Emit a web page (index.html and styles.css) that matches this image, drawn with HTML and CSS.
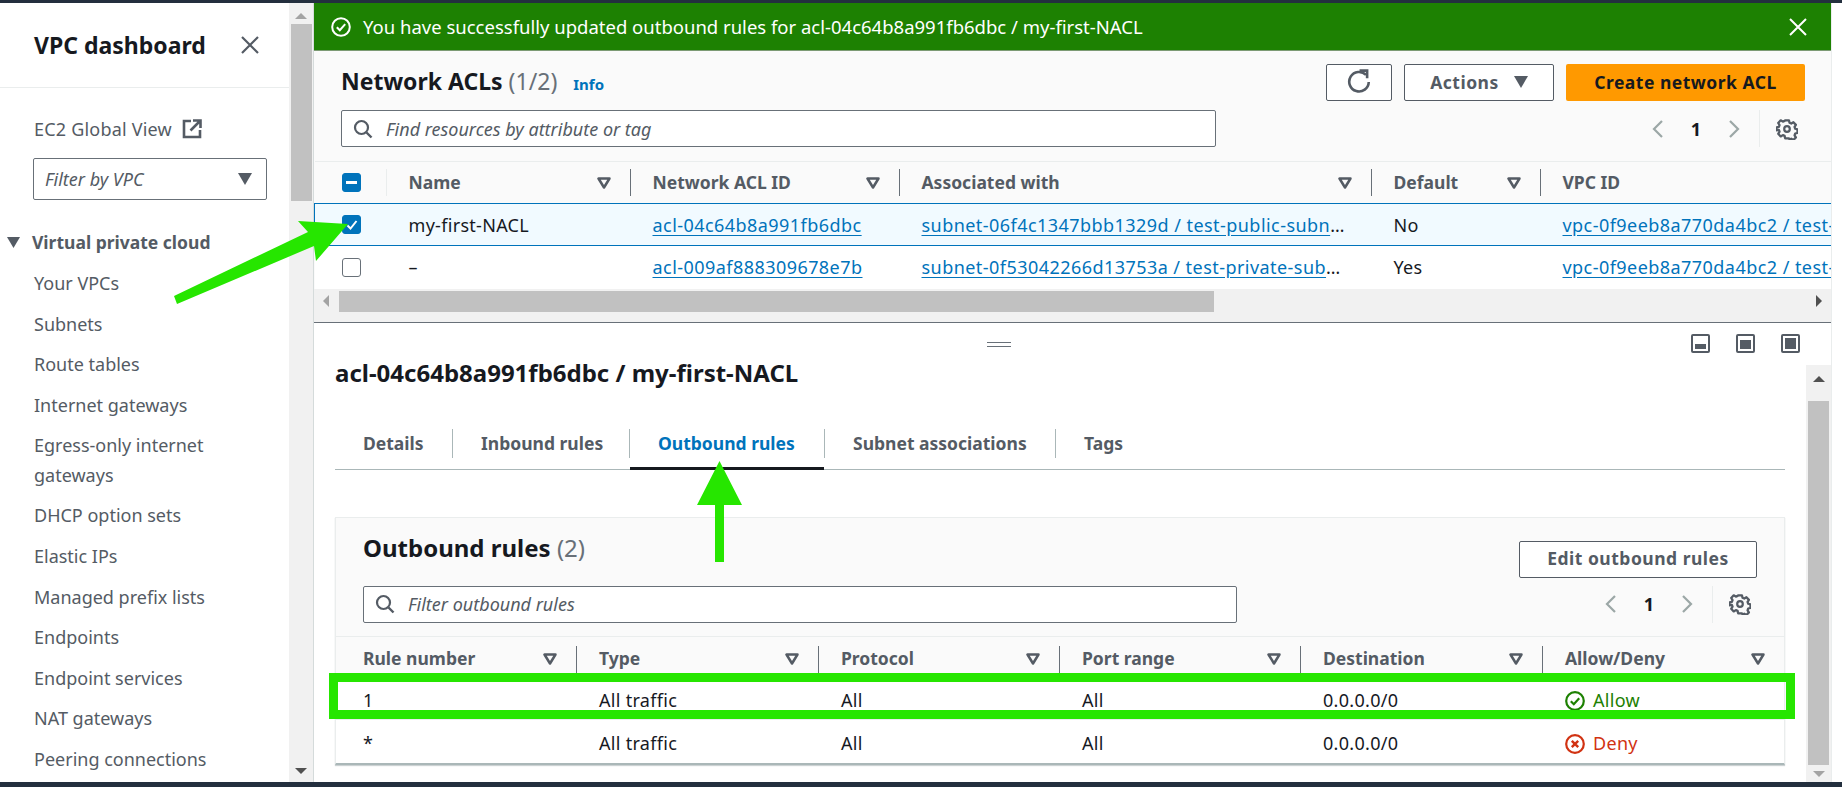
FILE: index.html
```html
<!DOCTYPE html>
<html lang="en">
<head>
    <meta charset="UTF-8">
    <title>Network ACLs | VPC Console</title>
    <link rel="stylesheet" href="styles.css">
</head>
<body>
    <svg class="defs" width="0" height="0">
        <symbol id="sort" viewBox="0 0 14 12"><path d="M1.500 1.500h11L7 10.500z" fill="none" stroke="#545b64" stroke-width="2.500" stroke-linejoin="round"/></symbol>
        <symbol id="search" viewBox="0 0 20 20"><circle cx="8.5" cy="8.5" r="6.5" fill="none" stroke="#545b64" stroke-width="2.2"/><path d="M13.5 13.5l5 5" stroke="#545b64" stroke-width="2.4"/></symbol>
        <symbol id="gear" viewBox="0 0 22 22"><path d="M9 2h4l.6 2.6 1.8.8 2.3-1.4 2.6 2.8-1.4 2.2.7 1.9 2.4.6v3.8l-2.4.6-.7 1.9 1.4 2.2-2.6 2.8-2.3-1.4-1.8.8L13 21H9l-.6-2.6-1.8-.8-2.3 1.4-2.6-2.8 1.4-2.2-.7-1.9L0 12.5V9.5l2.4-.6.7-1.9-1.4-2.2L4.300 2l2.300 1.400 1.800-.8z" transform="translate(.6 .4) scale(.95)" fill="none" stroke="#545b64" stroke-width="2.400" stroke-linejoin="round"/><circle cx="11" cy="11" r="2.800" fill="none" stroke="#545b64" stroke-width="2.200"/></symbol>
        <symbol id="prev" viewBox="0 0 12 20"><path d="M10 2L2 10l8 8" fill="none" stroke="#9ba7a6" stroke-width="2.200"/></symbol>
        <symbol id="next" viewBox="0 0 12 20"><path d="M2 2l8 8-8 8" fill="none" stroke="#9ba7a6" stroke-width="2.200"/></symbol>
    </svg>

    <div class="topbar"></div>

    <div class="app">
        <nav class="sidebar">
            <div class="side-head">
                <span class="side-title">VPC dashboard</span>
                <svg class="side-close" width="18" height="18" viewBox="0 0 18 18"><path d="M1 1l16 16M17 1L1 17" stroke="#545b64" stroke-width="2.200"/></svg>
            </div>
            <div class="global-view">
                <span>EC2 Global View</span>
                <svg width="20" height="20" viewBox="0 0 20 20"><path d="M9 2H2v16h16v-7" fill="none" stroke="#545b64" stroke-width="2.600"/><path d="M11 1.500h7.500V9M18 2L8.500 11.500" fill="none" stroke="#545b64" stroke-width="2.600"/></svg>
            </div>
            <div class="vpc-filter">
                <span>Filter by VPC</span>
                <svg width="14" height="12" viewBox="0 0 14 12"><path d="M0 0h14L7 12z" fill="#545b64"/></svg>
            </div>
            <div class="side-section">
                <svg width="13" height="11" viewBox="0 0 13 11"><path d="M0 0h13L6.500 11z" fill="#545b64"/></svg>
                <span>Virtual private cloud</span>
            </div>
            <ul class="side-list">
                <li>Your VPCs</li>
                <li>Subnets</li>
                <li>Route tables</li>
                <li>Internet gateways</li>
                <li class="two-line">Egress-only internet gateways</li>
                <li>DHCP option sets</li>
                <li>Elastic IPs</li>
                <li>Managed prefix lists</li>
                <li>Endpoints</li>
                <li>Endpoint services</li>
                <li>NAT gateways</li>
                <li>Peering connections</li>
            </ul>
        </nav>

        <div class="vscroll side-scroll">
            <span class="arrow-up"></span>
            <span class="thumb side-thumb"></span>
            <span class="arrow-down"></span>
        </div>

        <main class="main">
            <div class="flash">
                <svg width="20" height="20" viewBox="0 0 20 20"><circle cx="10" cy="10" r="8.800" fill="none" stroke="#fff" stroke-width="2"/><path d="M5.800 10.200l3 3 5.400-6" fill="none" stroke="#fff" stroke-width="2"/></svg>
                <span class="flash-text">You have successfully updated outbound rules for acl-04c64b8a991fb6dbc / my-first-NACL</span>
                <svg class="flash-close" width="18" height="18" viewBox="0 0 18 18"><path d="M1 1l16 16M17 1L1 17" stroke="#fff" stroke-width="2"/></svg>
            </div>

            <section class="top-panel">
                <div class="toolbar">
                    <div class="tool-title">
                        <h2>Network ACLs <span class="count">(1/2)</span></h2>
                        <a class="info">Info</a>
                    </div>
                    <div class="tool-buttons">
                        <button class="btn btn-icon">
                            <svg width="24" height="26" viewBox="0 0 22 24"><path d="M17.500 5.500A9 9 0 1 0 20 12" fill="none" stroke="#545b64" stroke-width="2.400"/><path d="M11.500 1.500h7v7" fill="none" stroke="#545b64" stroke-width="2.400"/></svg>
                        </button>
                        <button class="btn btn-actions">Actions <svg width="14" height="12" viewBox="0 0 14 12"><path d="M0 0h14L7 12z" fill="#545b64"/></svg></button>
                        <button class="btn btn-primary">Create network ACL</button>
                    </div>
                </div>
                <div class="filter-row">
                    <div class="search search-top">
                        <svg width="20" height="20"><use href="#search"/></svg>
                        <span>Find resources by attribute or tag</span>
                    </div>
                    <div class="pager">
                        <svg width="12" height="20"><use href="#prev"/></svg>
                        <span class="page-no">1</span>
                        <svg width="12" height="20"><use href="#next"/></svg>
                        <span class="pager-sep"></span>
                        <svg width="22" height="22"><use href="#gear"/></svg>
                    </div>
                </div>

                <table class="grid grid-top">
                    <colgroup>
                        <col style="width:72px"><col style="width:244px"><col style="width:269px"><col style="width:472px"><col style="width:169px"><col style="width:291px">
                    </colgroup>
                    <thead>
                        <tr>
                            <th><div class="th-in th-faint"><span class="cb cb-mixed"></span></div></th>
                            <th><div class="th-in"><span>Name</span><svg width="14" height="12"><use href="#sort"/></svg></div></th>
                            <th><div class="th-in"><span>Network ACL ID</span><svg width="14" height="12"><use href="#sort"/></svg></div></th>
                            <th><div class="th-in"><span>Associated with</span><svg width="14" height="12"><use href="#sort"/></svg></div></th>
                            <th><div class="th-in"><span>Default</span><svg width="14" height="12"><use href="#sort"/></svg></div></th>
                            <th><div class="th-in th-last"><span>VPC ID</span></div></th>
                        </tr>
                    </thead>
                    <tbody>
                        <tr class="selected">
                            <td class="check-col"><span class="cb cb-checked"><svg width="14" height="14" viewBox="0 0 14 14"><path d="M2.500 7.500l3 3 6-7.500" fill="none" stroke="#fff" stroke-width="2"/></svg></span></td>
                            <td>my-first-NACL</td>
                            <td><a>acl-04c64b8a991fb6dbc</a></td>
                            <td><a>subnet-06f4c1347bbb1329d / test-public-subnet-1</a></td>
                            <td>No</td>
                            <td class="clip"><a>vpc-0f9eeb8a770da4bc2 / test-</a></td>
                        </tr>
                        <tr class="plain">
                            <td class="check-col"><span class="cb"></span></td>
                            <td>–</td>
                            <td><a>acl-009af888309678e7b</a></td>
                            <td><a>subnet-0f53042266d13753a / test-private-subnet-1</a></td>
                            <td>Yes</td>
                            <td class="clip"><a>vpc-0f9eeb8a770da4bc2 / test-</a></td>
                        </tr>
                    </tbody>
                </table>

                <div class="hscroll">
                    <span class="arrow-left"></span>
                    <span class="thumb h-thumb"></span>
                    <span class="arrow-right"></span>
                </div>
            </section>

            <section class="split-bar">
                <span class="drag"></span>
                <div class="split-icons">
                    <span class="split-icon"><i class="fill-low"></i></span>
                    <span class="split-icon"><i class="fill-mid"></i></span>
                    <span class="split-icon"><i class="fill-full"></i></span>
                </div>
            </section>

            <section class="detail">
                <div class="detail-content">
                    <h2 class="detail-title">acl-04c64b8a991fb6dbc / my-first-NACL</h2>
                    <div class="tabs">
                        <span class="tab tab-details">Details</span>
                        <span class="tab tab-inbound">Inbound rules</span>
                        <span class="tab tab-active">Outbound rules</span>
                        <span class="tab tab-subnet">Subnet associations</span>
                        <span class="tab tab-tags">Tags</span>
                    </div>

                    <div class="card">
                        <div class="card-head">
                            <div class="card-top">
                                <h2>Outbound rules <span class="count">(2)</span></h2>
                                <button class="btn btn-edit">Edit outbound rules</button>
                            </div>
                            <div class="card-filter">
                                <div class="search search-card">
                                    <svg width="20" height="20"><use href="#search"/></svg>
                                    <span>Filter outbound rules</span>
                                </div>
                                <div class="pager">
                                    <svg width="12" height="20"><use href="#prev"/></svg>
                                    <span class="page-no">1</span>
                                    <svg width="12" height="20"><use href="#next"/></svg>
                                    <span class="pager-sep"></span>
                                    <svg width="22" height="22"><use href="#gear"/></svg>
                                </div>
                            </div>
                        </div>
                        <table class="grid grid-rules">
                            <colgroup>
                                <col style="width:241px"><col style="width:242px"><col style="width:241px"><col style="width:241px"><col style="width:242px"><col style="width:241px">
                            </colgroup>
                            <thead>
                                <tr>
                                    <th><div class="th-in"><span>Rule number</span><svg width="14" height="12"><use href="#sort"/></svg></div></th>
                                    <th><div class="th-in"><span>Type</span><svg width="14" height="12"><use href="#sort"/></svg></div></th>
                                    <th><div class="th-in"><span>Protocol</span><svg width="14" height="12"><use href="#sort"/></svg></div></th>
                                    <th><div class="th-in"><span>Port range</span><svg width="14" height="12"><use href="#sort"/></svg></div></th>
                                    <th><div class="th-in"><span>Destination</span><svg width="14" height="12"><use href="#sort"/></svg></div></th>
                                    <th><div class="th-in th-last"><span>Allow/Deny</span><svg width="14" height="12"><use href="#sort"/></svg></div></th>
                                </tr>
                            </thead>
                            <tbody>
                                <tr>
                                    <td>1</td><td>All traffic</td><td>All</td><td>All</td><td>0.0.0.0/0</td>
                                    <td class="allow">
                                        <svg width="20" height="20" viewBox="0 0 20 20"><circle cx="10" cy="10" r="8.800" fill="none" stroke="#1d8102" stroke-width="2.200"/><path d="M5.800 10.200l3 3 5.400-6" fill="none" stroke="#1d8102" stroke-width="2.200"/></svg>
                                        <span>Allow</span>
                                    </td>
                                </tr>
                                <tr>
                                    <td>*</td><td>All traffic</td><td>All</td><td>All</td><td>0.0.0.0/0</td>
                                    <td class="deny">
                                        <svg width="20" height="20" viewBox="0 0 20 20"><circle cx="10" cy="10" r="8.800" fill="none" stroke="#d13212" stroke-width="2.200"/><path d="M6.800 6.800l6.400 6.400M13.200 6.800l-6.400 6.400" stroke="#d13212" stroke-width="2.400"/></svg>
                                        <span>Deny</span>
                                    </td>
                                </tr>
                            </tbody>
                        </table>
                    </div>
                </div>
                <div class="vscroll panel-scroll">
                    <span class="arrow-up"></span>
                    <span class="thumb panel-thumb"></span>
                    <span class="arrow-down arrow-faint"></span>
                </div>
            </section>
        </main>

        <div class="edge"></div>
    </div>

    <div class="bottombar"></div>

    <!-- green annotations drawn over the screenshot -->
    <svg class="marks" width="1842" height="787" viewBox="0 0 1842 787">
        <path d="M174 296L308 232L298 221L348 224L316 261L314 246L177 304z" fill="#26e600"/>
        <path d="M719.500 461L742 505H724V562H715V505H697z" fill="#26e600"/>
        <rect x="333.500" y="677.500" width="1457" height="37" fill="none" stroke="#26e600" stroke-width="9"/>
    </svg>
</body>
</html>
```

FILE: styles.css
```css
* {
    box-sizing: border-box;
}

body {
    margin: 0;
    width: 1842px;
    height: 787px;
    overflow: hidden;
    background-color: #fff;
    color: #16191f;
    font-family: "Noto Sans", sans-serif;
    font-size: 18px;
}

.defs {
    display: block;
    height: 0;
}

.marks {
    position: absolute;
    left: 0;
    top: 0;
    pointer-events: none;
}

.topbar {
    height: 3px;
    background-color: #232f3e;
}

.bottombar {
    height: 5px;
    background-color: #232f3e;
}

.app {
    display: flex;
    height: 779px;
}

/* sidebar */
.sidebar {
    width: 289px;
    flex: none;
    overflow: hidden;
    color: #545b64;
}

.side-head {
    display: flex;
    align-items: center;
    justify-content: space-between;
    height: 85px;
    padding: 0 30px 0 34px;
    border-bottom: 1px solid #eaeded;
}

.side-title {
    font-size: 23px;
    font-weight: 700;
    color: #16191f;
}

.global-view {
    display: flex;
    align-items: center;
    gap: 10px;
    height: 24px;
    margin: 29px 0 0 34px;
    letter-spacing: 0.2px;
}

.vpc-filter {
    display: flex;
    align-items: center;
    justify-content: space-between;
    width: 234px;
    height: 42px;
    margin: 17px 0 0 33px;
    padding: 0 14px 0 11px;
    border: 1px solid #687078;
    border-radius: 2px;
    font-style: italic;
}

.side-section {
    display: flex;
    align-items: center;
    gap: 12px;
    margin: 30px 0 0 7px;
    height: 24px;
    font-size: 17.500px;
    font-weight: 700;
}

.side-list {
    list-style: none;
    margin: 9px 0 0;
    padding: 0 30px 0 34px;
}

.side-list li {
    height: 40.600px;
    line-height: 40.600px;
}

.side-list .two-line {
    height: 70px;
    line-height: 30px;
    padding-top: 5px;
}

/* scrollbars */
.vscroll {
    display: flex;
    flex-direction: column;
    align-items: center;
    flex: none;
    width: 25px;
    background-color: #f1f1f1;
}

.side-scroll {
    border-right: 1px solid #d5dbdb;
}

.thumb {
    display: block;
    background-color: #c1c1c1;
}

.side-thumb {
    width: 21px;
    height: 177px;
    margin-top: 5px;
}

.arrow-up, .arrow-down {
    width: 0;
    height: 0;
    border-left: 6px solid transparent;
    border-right: 6px solid transparent;
}

.arrow-up {
    margin-top: 9px;
    border-bottom: 6px solid #a3a3a3;
}

.arrow-down {
    margin-top: auto;
    margin-bottom: 8px;
    border-top: 6px solid #505050;
}

.arrow-faint {
    border-top-color: #a3a3a3;
}

.side-scroll .arrow-up {
    margin-top: 10px;
}

.hscroll {
    display: flex;
    align-items: center;
    height: 33px;
    padding: 0 9px 8px;
    background-color: #f1f1f1;
}

.arrow-left, .arrow-right {
    width: 0;
    height: 0;
    border-top: 6px solid transparent;
    border-bottom: 6px solid transparent;
}

.arrow-left {
    border-right: 6px solid #a3a3a3;
}

.arrow-right {
    margin-left: auto;
    border-left: 6px solid #505050;
}

.h-thumb {
    width: 875px;
    height: 21px;
    margin-left: 10px;
}

/* main column */
.main {
    display: flex;
    flex-direction: column;
    width: 1517px;
    flex: none;
    min-width: 0;
}

.edge {
    flex: 1;
    border-left: 1px solid #eaeded;
}

.flash {
    display: flex;
    align-items: center;
    height: 48px;
    padding: 0 24px 0 17px;
    background-color: #1d8102;
    border-bottom: 1px solid #7c9a74;
    color: #fff;
    font-size: 18.500px;
}

.flash-text {
    margin-left: 12px;
}

.flash-close {
    margin-left: auto;
}

.top-panel {
    background-color: #fafafa;
    border-bottom: 1px solid #687078;
}

.toolbar {
    display: flex;
    align-items: center;
    justify-content: space-between;
    height: 50px;
    padding: 13px 26px 0 27px;
}

.tool-title {
    display: flex;
    align-items: baseline;
    gap: 16px;
    margin-top: -1px;
}

h2 {
    margin: 0;
    font-size: 23px;
    font-weight: 700;
    line-height: 1.2;
}

.count {
    font-weight: 400;
    color: #687078;
}

.info {
    color: #0073bb;
    font-size: 15px;
    font-weight: 700;
}

.tool-buttons {
    display: flex;
    gap: 12px;
}

.btn {
    display: flex;
    align-items: center;
    justify-content: center;
    height: 37px;
    padding: 0 0 2px;
    border: 1px solid #545b64;
    border-radius: 2px;
    background-color: #fff;
    color: #545b64;
    font-family: inherit;
    font-size: 17.500px;
    font-weight: 700;
    letter-spacing: 0.5px;
}

.btn-icon {
    width: 66px;
}

.btn-actions {
    width: 150px;
    gap: 15px;
}

.btn-primary {
    width: 239px;
    border: none;
    background-color: #f90;
    color: #16191f;
}

.btn-edit {
    width: 238px;
}

.filter-row, .card-filter {
    display: flex;
    align-items: center;
    justify-content: space-between;
}

.filter-row {
    height: 37px;
    margin-top: 9px;
    padding: 0 33px 0 27px;
}

.search {
    display: flex;
    align-items: center;
    gap: 13px;
    height: 37px;
    padding-left: 11px;
    border: 1px solid #687078;
    border-radius: 2px;
    background-color: #fff;
    color: #545b64;
    font-style: italic;
}

.search-top {
    width: 875px;
}

.search-card {
    width: 874px;
}

.pager {
    display: flex;
    align-items: center;
}

.page-no {
    width: 64px;
    text-align: center;
    font-weight: 700;
}

.pager-sep {
    width: 1px;
    height: 37px;
    margin: 0 16px 0 19px;
    background-color: #eaeded;
}

/* tables */
.grid {
    border-collapse: collapse;
    table-layout: fixed;
}

.grid-top {
    width: 1517px;
    margin-top: 14px;
    border-top: 1px solid #eaeded;
}

.grid th {
    padding: 0;
    height: 42px;
    text-align: left;
    font-size: 17.500px;
    font-weight: 700;
    color: #545b64;
}

.th-in {
    display: flex;
    align-items: center;
    justify-content: space-between;
    height: 27px;
    padding: 0 19px 0 22px;
    border-right: 1px solid #687078;
}

.th-in span {
    margin-bottom: 2px;
}

.th-in .cb {
    margin-bottom: 0;
}

.th-faint {
    justify-content: flex-start;
    padding-left: 27px;
    border-right-color: #eaeded;
}

.th-last {
    border-right: none;
}

.grid td {
    padding: 0 24px 0 22px;
    overflow: hidden;
    white-space: nowrap;
    text-overflow: ellipsis;
    letter-spacing: 0.3px;
}

.grid-top td {
    height: 42px;
    background-color: #fff;
}

.grid-top .plain td {
    height: 43px;
}

.grid-top .clip {
    text-overflow: clip;
    padding-right: 0;
}

.grid-top .check-col {
    padding-left: 27px;
}

.grid-top .selected td {
    background-color: #f1faff;
    border-top: 1px solid #0073bb;
    border-bottom: 1px solid #0073bb;
}

.grid-top .selected td:first-child {
    border-left: 1px solid #0073bb;
}

.grid a {
    color: #0073bb;
    letter-spacing: 0.45px;
    text-decoration: underline;
    text-underline-offset: 3px;
}

.cb {
    display: block;
    width: 19px;
    height: 19px;
    border: 1px solid #687078;
    border-radius: 3px;
    background-color: #fff;
}

.cb-mixed {
    border-color: #0073bb;
    background-color: #0073bb;
}

.cb-mixed::after {
    content: "";
    display: block;
    width: 11px;
    height: 3px;
    margin: 7px 3px;
    background-color: #fff;
}

.cb-checked {
    display: flex;
    align-items: center;
    justify-content: center;
    border-color: #0073bb;
    background-color: #0073bb;
}

/* split panel */
.split-bar {
    display: flex;
    align-items: center;
    flex: none;
    height: 42px;
    padding-right: 31px;
}

.drag {
    width: 24px;
    height: 5px;
    margin-left: 673px;
    margin-top: 2px;
    border-top: 1px solid #687078;
    border-bottom: 1px solid #687078;
}

.split-icons {
    display: flex;
    gap: 26px;
    margin-left: auto;
}

.split-icon {
    display: flex;
    align-items: flex-end;
    width: 19px;
    height: 19px;
    padding: 2px;
    border: 2px solid #545b64;
    border-radius: 2px;
}

.split-icon i {
    display: block;
    width: 100%;
    background-color: #545b64;
}

.fill-low {
    height: 5px;
}

.fill-mid {
    height: 9px;
}

.fill-full {
    height: 100%;
}

.detail {
    display: flex;
    flex: 1;
    min-height: 0;
}

.detail-content {
    flex: 1;
    min-width: 0;
    padding: 0 21px;
}

.detail-title {
    margin-top: -5px;
    font-size: 24px;
    line-height: 26px;
}

.tabs {
    display: flex;
    align-items: flex-start;
    height: 41px;
    margin-top: 43px;
    border-bottom: 1px solid #aab7b8;
    font-size: 17.500px;
    font-weight: 700;
    white-space: nowrap;
    color: #545b64;
}

.tab {
    display: flex;
    align-items: center;
    height: 29px;
    padding: 0 0 0 28px;
    border-right: 1px solid #aab7b8;
}

.tab-tags {
    border-right: none;
}

.tab-details {
    width: 118px;
}

.tab-inbound {
    width: 177px;
}

.tab-active {
    position: relative;
    width: 195px;
    color: #0073bb;
}

.tab-active::after {
    content: "";
    position: absolute;
    left: 0;
    right: 0;
    bottom: -12px;
    height: 3px;
    background-color: #16191f;
}

.tab-subnet {
    width: 231px;
}

.card {
    width: 1450px;
    margin-top: 47px;
    border: 1px solid #eaeded;
    border-bottom: 2px solid #aab7b8;
    box-shadow: 0 1px 1px rgba(0, 28, 36, 0.2);
    background-color: #fff;
}

.card-head {
    height: 119px;
    padding: 23px 27px 0 27px;
    background-color: #fafafa;
    border-bottom: 1px solid #eaeded;
}

.card-top {
    display: flex;
    align-items: flex-start;
    justify-content: space-between;
    height: 37px;
}

.card-top h2 {
    margin-top: -7px;
    font-size: 24px;
}

.card-filter {
    margin-top: 8px;
}

.card-filter .pager {
    margin-right: 6px;
}

.grid-rules {
    width: 1448px;
}

.grid-rules th {
    height: 41px;
    padding-top: 4px;
    background-color: #fafafa;
}

.grid-rules th:first-child .th-in {
    padding-left: 27px;
}

.grid-rules td {
    height: 42px;
    padding-top: 4px;
}

.grid-rules td:first-child {
    padding-left: 27px;
}

.grid-rules tbody tr + tr td {
    height: 43px;
    padding-top: 4px;
    border-top: 1px solid #eaeded;
}

.allow svg, .deny svg {
    vertical-align: -4px;
    margin-right: 3px;
}

.allow {
    color: #1d8102;
}

.deny {
    color: #d13212;
}

.panel-thumb {
    width: 21px;
    height: 364px;
    margin-top: 19px;
}

.panel-scroll {
    height: 417px;
}

.panel-scroll .arrow-up {
    border-bottom-color: #505050;
    margin-top: 11px;
}

.panel-scroll .arrow-down {
    margin-bottom: 5px;
}
```
